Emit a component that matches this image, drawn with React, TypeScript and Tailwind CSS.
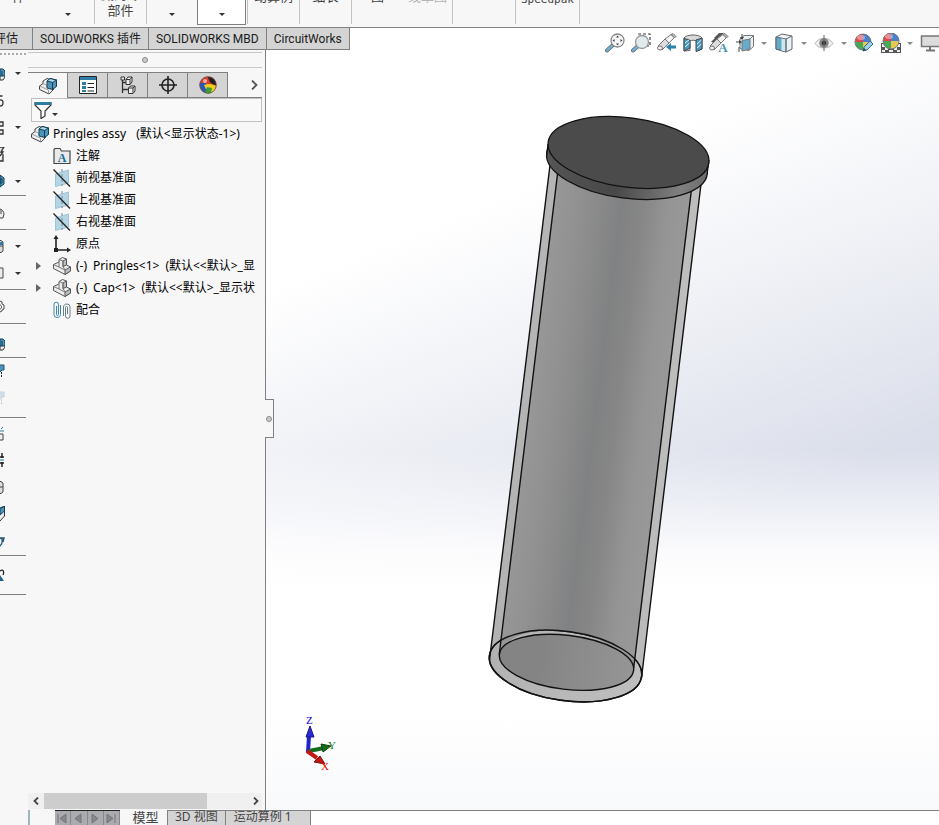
import React from "react";

type IconProps = { className?: string };

const Caret: React.FC<IconProps> = ({ className = "text-[#333]" }) => (
  <svg viewBox="0 0 6 3" className={`h-[3px] w-[6px] shrink-0 ${className}`}>
    <path d="M0 0h6L3 3z" fill="currentColor" />
  </svg>
);

/* ---------- feature tree icons ---------- */

const AssemblyIcon: React.FC = () => (
  <svg viewBox="0 0 18 18" className="h-[18px] w-[18px] shrink-0">
    <path d="M.5 9 4 6.500V4l4-2.500 3 1V10l4 2-5 5L.5 12.500z" fill="#f0f0f0" stroke="#444" strokeLinejoin="round" />
    <path d="M.5 9 9.500 13v4M4 6.500l4 2" fill="none" stroke="#888" strokeWidth=".8" />
    <path d="M8 4 11 1.500 17.500 3v6.500L13.500 12.500 8 11z" fill="#4f93b8" stroke="#123f59" strokeLinejoin="round" />
    <path d="M8 4 13.500 5.500l4-2.500L11 1.500z" fill="#a9d5e9" stroke="#123f59" strokeLinejoin="round" />
    <path d="M13.500 5.500v7" stroke="#123f59" />
  </svg>
);

const PartIcon: React.FC = () => (
  <svg viewBox="0 0 18 18" className="h-[18px] w-[18px] shrink-0">
    <path d="M.5 7.500 6 5V2.500L9.500.5l4 1.500v6l4 2v4L12 17.500.5 11.500z" fill="#ececec" stroke="#555" strokeLinejoin="round" />
    <path d="M12 13l5.500-3v4L12 17.500zM10 4l3.500-2v6L10 9.500z" fill="#bdbdbd" stroke="#555" strokeLinejoin="round" />
    <path d="M.5 7.500 6 10l6 3M6 5v5M6 2.500 10 4v5.500l2 3.500" fill="none" stroke="#777" />
  </svg>
);

const NoteFolderIcon: React.FC = () => (
  <svg viewBox="0 0 18 18" className="h-[18px] w-[18px] shrink-0">
    <path d="M1 16V2.500L2 1.500h5L8.500 4H17v12.500H1z" fill="#e8eaec" stroke="#444" strokeWidth="1.200" />
    <text x="9" y="14.500" textAnchor="middle" fontFamily="Liberation Serif, serif" fontWeight="bold" fontSize="12" fill="#1d6a92">
      A
    </text>
  </svg>
);

const PlaneIcon: React.FC = () => (
  <svg viewBox="0 0 18 18" className="h-[18px] w-[18px] shrink-0">
    <path d="M2.500 5 15.500 1v13L2.500 17.500z" fill="#b5d5e4" stroke="#9fc4d6" />
    <path d="M9 0v17" stroke="#6e8c9b" strokeDasharray="3 2" />
    <path d="M.5.500 17 17.500" stroke="#222" strokeWidth="1.300" />
  </svg>
);

const OriginIcon: React.FC = () => (
  <svg viewBox="0 0 18 18" className="h-[18px] w-[18px] shrink-0">
    <path d="M3 3v12h12" fill="none" stroke="#222" strokeWidth="1.600" />
    <path d="M3 0 5.500 4h-5zM18 15l-4-2.500v5z" fill="#222" />
    <path d="M1 13h4v4H1z" fill="#222" />
  </svg>
);

const MatesIcon: React.FC = () => (
  <svg viewBox="0 0 18 18" className="h-[18px] w-[18px] shrink-0">
    <g fill="none" stroke="#3d86ab">
      <path d="M3.500 5v8.500a1 1 0 0 0 2 0V3.500a2.200 2.200 0 0 0-4.500 0v10a3 3 0 0 0 3 3c2.500 0 3.500-1.500 3.500-3V4" />
      <path d="M14.500 13V6.500a1 1 0 0 0-2 0V15a2.200 2.200 0 0 0 4.500 0V6a3 3 0 0 0-3-3c-2.500 0-3.500 1.500-3.500 3v9" stroke="#6b7e88" />
    </g>
  </svg>
);

const PropertyIcon: React.FC = () => (
  <svg viewBox="0 0 18 18" className="h-[18px] w-[18px]">
    <path d="M.5.500h17v17H.5z" fill="#fff" stroke="#222" />
    <path d="M1 1h16v3H1z" fill="#2d7da6" />
    <path d="M3 6h4v3H3zM3 10h4v3H3zM3 14h4v2H3z" fill="#2d7da6" />
    <path d="M8.500 7.500H15M8.500 11.500H15M8.500 15H15" stroke="#222" />
  </svg>
);

const ConfigIcon: React.FC = () => (
  <svg viewBox="0 0 18 18" className="h-[18px] w-[18px]">
    <g fill="#f0f0f0" stroke="#333">
      <path d="M3.500 3v14M3.500 6.500H7M3.500 13.500H9" fill="none" strokeWidth="1.300" />
      <path d="M2 1h3.500v3H2z" />
      <path d="M7 3.500 9 1h4v5l-2 2.500H7zM9.500 12l2-2h4.500v5l-2 2.500H9.500z" />
      <path d="M7 3.500h4v5M11 3.500 13 1M9.500 12H14v5M14 12l2-2" fill="none" />
    </g>
  </svg>
);

const TargetIcon: React.FC = () => (
  <svg viewBox="0 0 18 18" className="h-[18px] w-[18px]">
    <circle cx="9" cy="9" r="6" fill="none" stroke="#222" strokeWidth="1.600" />
    <path d="M9 0v18M0 9h18" stroke="#222" strokeWidth="1.600" />
  </svg>
);

const BallShape: React.FC = () => (
  <>
    <path d="M9 9V1a8 8 0 0 0-8 8z" fill="#e0484c" />
    <path d="M9 9V1a8 8 0 0 1 8 8z" fill="#4c80cf" />
    <path d="M9 9h8a8 8 0 0 1-8 8z" fill="#e8c850" />
    <path d="M9 9H1a8 8 0 0 0 8 8z" fill="#46a858" />
    <circle cx="9" cy="9" r="8" fill="none" stroke="#777" />
    <ellipse cx="7" cy="4.500" rx="4" ry="2.500" fill="#fff" opacity=".4" />
  </>
);

const AppearanceIcon: React.FC = () => (
  <svg viewBox="0 0 18 18" className="h-[18px] w-[18px]">
    <circle cx="9" cy="9" r="8.500" fill="#e23b2c" />
    <path d="M1 7h6l2 10C4 17 0 12 1 7z" fill="#2856c0" />
    <path d="M5 9c5-2 9-1 12 1-1 5-4 7.500-8 7.500z" fill="#f1cf1c" />
    <path d="m8 11 5 1-1 5c-2 .7-4 .5-6-.5z" fill="#3b9c3b" />
    <path d="M9 1c5-.5 8 3 8 8-4 0-7-3-8-8z" fill="#222" />
    <circle cx="9" cy="9" r="8.300" fill="none" stroke="#554" strokeWidth=".7" />
    <circle cx="6" cy="5" r="2" fill="#fff" opacity=".6" />
  </svg>
);

/* ---------- heads-up view toolbar icons ---------- */

const hud = "h-5 w-5 shrink-0";

const ZoomFitIcon = () => (
  <svg viewBox="0 0 20 20" className={hud}>
    <path d="M2 17.500 8 12" stroke="#666" strokeWidth="4" strokeLinecap="round" />
    <path d="M2 17.500 8 12" stroke="#6fb0d0" strokeWidth="2.500" strokeLinecap="round" />
    <circle cx="12.500" cy="7.500" r="6.500" fill="#f4f6f7" stroke="#888" strokeWidth="1.300" />
    <path d="m12.500 2.500 1.500 2h-3zM12.500 12.500l1.500-2h-3zM7.500 7.500l2-1.500v3zM17.500 7.500l-2-1.500v3z" fill="#444" />
  </svg>
);

const ZoomAreaIcon = () => (
  <svg viewBox="0 0 20 20" className={hud}>
    <path d="M7 1h12v12h-4" fill="none" stroke="#444" strokeWidth="1.200" strokeDasharray="3 2" />
    <path d="M2 17.500 7 13" stroke="#666" strokeWidth="4" strokeLinecap="round" />
    <path d="M2 17.500 7 13" stroke="#6fb0d0" strokeWidth="2.500" strokeLinecap="round" />
    <circle cx="11" cy="9" r="6.500" fill="#e3eaee" stroke="#999" strokeWidth="1.300" />
  </svg>
);

const TelescopeShape = () => (
  <g stroke="#777" strokeLinejoin="round">
    <path d="m1 13 7-7 4 4-7 7z" fill="#ddd" />
    <path d="m8 6 6-4.500 3.500 3L12 10z" fill="#f2f2f2" />
    <path d="m14 1.500 2-1 3 3-1.500 1.500z" fill="#bbb" />
    <ellipse cx="3" cy="15" rx="2.500" ry="2" fill="#eee" />
  </g>
);

const PrevViewIcon = () => (
  <svg viewBox="0 0 20 20" className={hud}>
    <TelescopeShape />
    <path d="m9 14 5-4v2.500h5v3h-5V18z" fill="#2f82ac" />
  </svg>
);

const SectionIcon = () => (
  <svg viewBox="0 0 20 20" className={hud}>
    <path d="M1 5C3 1 17 1 19 5v11l-5 2V8c-2-1-6-1-7 0v9.500L1 18z" fill="#d9d9d9" stroke="#666" />
    <path d="M1 5.500 7 7v8l-6 3zM13 7l6-2v11l-6 2.500z" fill="#4b9bc1" stroke="#444" />
    <path d="m2 10 4.500-3.500M2 14l4.500-4M14 11l4.500-4M14 15l4.500-4" stroke="#dff0f7" />
  </svg>
);

const DynamicAnnotationIcon = () => (
  <svg viewBox="0 0 20 20" className={hud}>
    <path d="M5 5 10 0h5L9 5zM2 9l4-4h5L5 10z" fill="#555" />
    <TelescopeShape />
    <text x="14" y="19" textAnchor="middle" fontFamily="Liberation Serif, serif" fontWeight="bold" fontSize="13" fill="#4a93b8">
      A
    </text>
  </svg>
);

const OrientationIcon = () => (
  <svg viewBox="0 0 20 20" className={hud}>
    <path d="M5 6 9 2.500h9.500v11l-4.500 4-9-2z" fill="#e6f1f6" stroke="#777" />
    <path d="M7 7.500 15 6v10l-8 2z" fill="#68abcb" stroke="#777" />
    <path d="m15 6 3.500-3.500" stroke="#777" />
    <path d="M7 1v5M1 9h4M4 14v5" stroke="#444" />
    <path d="m5 4 2 3 2-3zM4 7l3 2-3 2z" fill="#444" />
  </svg>
);

const DisplayStyleIcon = () => (
  <svg viewBox="0 0 20 20" className={hud}>
    <path d="M2 4 8 1l10 2v13l-6 3-10-3z" fill="#eaf3f8" stroke="#666" strokeLinejoin="round" />
    <path d="m2 4 10 2v13L2 16z" fill="#62a8c9" stroke="#666" />
    <path d="m7.500 5.500 4 .8v12.200l-4-1z" fill="#cfe6f1" />
    <path d="M12 6l6-3M12 6v13" fill="none" stroke="#666" />
  </svg>
);

const EyeIcon = () => (
  <svg viewBox="0 0 20 20" className={hud}>
    <path d="M1 10.500c4-7 14-7 18 0-4 6-14 6-18 0z" fill="#f1f1f1" stroke="#b5b5b5" />
    <circle cx="10" cy="10" r="4.800" fill="#888" />
    <circle cx="10" cy="10" r="2.300" fill="#333" />
    <path d="M10 2v16" stroke="#666" />
  </svg>
);

const EditAppearanceIcon = () => (
  <svg viewBox="0 0 20 20" className={hud}>
    <BallShape />
    <path d="m9 18 1-4 6-6 3 3-6 6z" fill="#9fd0e6" stroke="#2d6f92" />
    <path d="m9 18 1-3 2 2z" fill="#333" />
  </svg>
);

const ApplySceneIcon = () => (
  <svg viewBox="0 0 20 20" className={hud}>
    <path d="M0 10h20v10H0z" fill="#555" />
    <path d="M1 11h3v3H1zM4 14h3v3H4zM16 11h3v3h-3zM13 14h3v3h-3zM1 17h3v2H1zM16 17h3v2h-3zM8 17h4v2H8z" fill="#eee" />
    <g transform="translate(1 -1)">
      <BallShape />
    </g>
  </svg>
);

const MonitorIcon = () => (
  <svg viewBox="0 0 20 20" className={hud}>
    <path d="M1.500 3h20v10.500h-20z" fill="#dcdcdc" stroke="#777" strokeWidth="1.500" />
    <path d="M10 14v3M6 17.500h9" stroke="#777" strokeWidth="2" />
  </svg>
);

/* ---------- ribbon ---------- */

type RibbonGroupProps = { className: string; children?: React.ReactNode };

const RibbonGroup: React.FC<RibbonGroupProps> = ({ className, children }) => (
  <div className={`flex h-6 shrink-0 items-end overflow-hidden border-r border-[#c3c3c3] ${className}`}>
    {children}
  </div>
);

const Ribbon: React.FC = () => (
  <header className="flex h-7 shrink-0 overflow-hidden border-b border-[#808080] bg-[#f7f7f7] text-[13px] leading-4 text-[#444]">
    <RibbonGroup className="w-[95px] gap-10 pl-3">
      <button className="pb-5">件</button>
      <button aria-label="零部件选项" className="pb-2">
        <Caret />
      </button>
    </RibbonGroup>
    <RibbonGroup className="w-[52px] justify-center">
      <button className="w-[42px] pb-1.5 text-center">显示隐藏的零部件</button>
    </RibbonGroup>
    <div className="flex h-6 w-[50px] shrink-0 items-end justify-center">
      <button aria-label="装配体特征" className="pb-2">
        <Caret />
      </button>
    </div>
    <button
      aria-label="参考几何体"
      className="mr-px flex h-[25px] w-[49px] shrink-0 items-end justify-center border border-t-0 border-[#808080] bg-white pb-2"
    >
      <Caret />
    </button>
    <RibbonGroup className="w-[53px] justify-center border-l">
      <button className="pb-5">动算例</button>
    </RibbonGroup>
    <RibbonGroup className="w-[52px] justify-center">
      <button className="pb-5">细表</button>
    </RibbonGroup>
    <RibbonGroup className="w-[101px] gap-6 pl-[19px]">
      <button className="pb-5">图</button>
      <button disabled className="pb-5 text-[#b5b5b5]">
        线草图
      </button>
    </RibbonGroup>
    <RibbonGroup className="w-[63px]" />
    <RibbonGroup className="w-16 justify-center">
      <button className="pb-4 font-['DejaVu_Sans_Mono',monospace] text-[11px]">Speedpak</button>
    </RibbonGroup>
  </header>
);

const commandTabs = ["评估", "SOLIDWORKS 插件", "SOLIDWORKS MBD", "CircuitWorks"];

const CommandTabs: React.FC = () => (
  <nav className="flex h-[22px] shrink-0 border-b border-[#808080] bg-[#d4d4d4] font-['Roboto','Noto_Sans_CJK_SC',sans-serif] text-xs text-[#1b1b1b]">
    {commandTabs.map((tab, i) => (
      <button
        key={tab}
        className={
          i === 0
            ? "flex w-[33px] items-center justify-end overflow-hidden border-r border-[#808080] pr-[14px] whitespace-nowrap"
            : "border-r border-[#808080] px-[7px] whitespace-nowrap"
        }
      >
        {tab}
      </button>
    ))}
  </nav>
);

/* ---------- heads-up toolbar ---------- */

const HudCaret = () => (
  <button aria-label="更多" className="flex w-3 shrink-0 justify-center">
    <Caret className="text-[#888]" />
  </button>
);

const HeadsUpToolbar: React.FC = () => {
  const narrow = "flex w-[26px] shrink-0 justify-center";
  const wide = "flex w-7 shrink-0 justify-center";
  return (
    <div className="ml-auto flex h-[30px] items-center">
      <button aria-label="整屏显示全图" className={narrow}><ZoomFitIcon /></button>
      <button aria-label="局部放大" className={narrow}><ZoomAreaIcon /></button>
      <button aria-label="上一视图" className={narrow}><PrevViewIcon /></button>
      <button aria-label="剖面视图" className={narrow}><SectionIcon /></button>
      <button aria-label="动态注解视图" className={narrow}><DynamicAnnotationIcon /></button>
      <button aria-label="视图定向" className={narrow}><OrientationIcon /></button>
      <HudCaret />
      <button aria-label="显示样式" className={wide}><DisplayStyleIcon /></button>
      <HudCaret />
      <button aria-label="隐藏项目" className={wide}><EyeIcon /></button>
      <HudCaret />
      <button aria-label="编辑外观" className={wide}><EditAppearanceIcon /></button>
      <button aria-label="应用布景" className={narrow}><ApplySceneIcon /></button>
      <HudCaret />
      <button aria-label="视图设定" className="flex w-[23px] shrink-0 overflow-hidden pl-1">
        <MonitorIcon />
      </button>
    </div>
  );
};

/* ---------- left tool strip ---------- */

type StripItem = { art: React.ReactNode; menu?: boolean };
type StripSection = { className: string; items: StripItem[] };

const cube = (
  <>
    <path d="M0 4h3l2 2v5l-2 3H0z" fill="#eee" stroke="#333" />
    <path d="M0 3h3l2 2v5H0z" fill="#4b94bb" stroke="#123f59" />
    <path d="M2 5v5" stroke="#123f59" />
  </>
);
const box = <path d="M0 2.500h1l2 1.500v9l-2 1.500H0M0 8h3" fill="#ddd" stroke="#444" />;
const pin = (
  <>
    <path d="M0 2h4v5H2L0 9" fill="#4b94bb" stroke="#1c5573" />
    <path d="M1.500 9v2M1.500 12v2" stroke="#222" />
  </>
);

const stripSections: StripSection[] = [
  {
    className: "h-[136px]",
    items: [
      { art: cube, menu: true },
      { art: <path d="M2.500 3H0M0 7c4-1 4 6 0 6" fill="none" stroke="#333" strokeWidth="1.300" /> },
      { art: <path d="M0 2h3v4H0M0 10h3v4H0" fill="#eee" stroke="#333" strokeWidth="1.300" />, menu: true },
      { art: <path d="M0 0h4L1 5h2L0 9M3 7v7H0" fill="#ddd" stroke="#333" strokeWidth="1.300" /> },
      { art: <path d="m0 1 4 3v6l-4 3zM0 5h2v4H0z" fill="#4b94bb" stroke="#123f59" />, menu: true },
    ],
  },
  { className: "h-[34px]", items: [{ art: <path d="M0 4c2 0 4 3 4 5l-1 4H0M1 5v4" fill="#eee" stroke="#444" /> }] },
  {
    className: "h-[60px]",
    items: [
      {
        art: (
          <>
            {box}
            <path d="M0 4h3v3H0z" fill="#2d7da6" />
          </>
        ),
        menu: true,
      },
      { art: <path d="M0 3h3v10H0" fill="#eee" stroke="#444" />, menu: true },
    ],
  },
  { className: "h-[34px]", items: [{ art: <path d="m0 2 2 1v2l2 1v4l-2 1v1l-2 1M0 6c2 0 2 4 0 4" fill="none" stroke="#444" /> }] },
  { className: "h-[34px] pt-1.5", items: [{ art: cube }] },
  {
    className: "h-[60px] pb-1.5",
    items: [{ art: pin }, { art: <g opacity=".22">{pin}</g> }],
  },
  {
    className: "h-[138px]",
    items: [
      {
        art: (
          <>
            <path d="M0 9h3v6H0" fill="#eee" stroke="#444" />
            <path d="M0 6h4M1 4l2-2" stroke="#2d7da6" />
          </>
        ),
      },
      {
        art: (
          <>
            <path d="M2 1v5M0 5h4M2 10v5M0 11h4" stroke="#222" strokeWidth="1.500" />
            <path d="M0 8h4" stroke="#2d7da6" />
          </>
        ),
      },
      { art: box },
      {
        art: (
          <>
            <path d="M0 2 4.500 0v10L0 15" fill="#eee" stroke="#333" />
            <path d="M0 3 4.500 0v5L0 9z" fill="#4b94bb" stroke="#123f59" />
          </>
        ),
      },
      { art: <path d="M0 5c3 0 3 5 0 8M0 5h4l-1 4" fill="none" stroke="#1c5573" strokeWidth="1.300" /> },
    ],
  },
  {
    className: "h-[39px]",
    items: [
      {
        art: (
          <>
            <path d="M0 4c4-3 4 2 3 4" fill="none" stroke="#222" strokeWidth="1.300" />
            <path d="m0 8 4 6H0z" fill="#1f6287" />
          </>
        ),
      },
    ],
  },
];

const ToolStrip: React.FC = () => (
  <aside className="flex w-7 shrink-0 flex-col bg-[#f7f7f7]">
    <div className="mt-[3px] mb-[5px] w-[26px] border-t-2 border-dotted border-[#a8a8a8]" />
    {stripSections.map((section, i) => (
      <div key={i} className={`flex w-[26px] flex-col justify-center border-b border-[#808080] ${section.className}`}>
        {section.items.map((item, j) => (
          <button key={j} aria-label={`工具 ${i + 1}.${j + 1}`} className="flex h-[27px] shrink-0 items-center gap-2.5">
            <svg viewBox="0 0 5 16" className="h-4 w-[5px]">
              {item.art}
            </svg>
            {item.menu && <Caret />}
          </button>
        ))}
      </div>
    ))}
  </aside>
);

/* ---------- feature manager ---------- */

const managerTabs = [
  { label: "配置属性", icon: <PropertyIcon /> },
  { label: "配置管理", icon: <ConfigIcon /> },
  { label: "尺寸管理", icon: <TargetIcon /> },
  { label: "外观管理", icon: <AppearanceIcon /> },
];

const treeItems = [
  { parts: ["注解"], icon: <NoteFolderIcon /> },
  { parts: ["前视基准面"], icon: <PlaneIcon /> },
  { parts: ["上视基准面"], icon: <PlaneIcon /> },
  { parts: ["右视基准面"], icon: <PlaneIcon /> },
  { parts: ["原点"], icon: <OriginIcon /> },
  { parts: ["(-)", "Pringles<1>", "(默认<<默认>_显"], icon: <PartIcon />, expandable: true },
  { parts: ["(-)", "Cap<1>", "(默认<<默认>_显示状"], icon: <PartIcon />, expandable: true },
  { parts: ["配合"], icon: <MatesIcon /> },
];

const FeatureTree: React.FC = () => (
  <ul className="min-h-0 flex-1 overflow-hidden pt-px text-xs text-black">
    <li className="flex h-[22px] items-center pl-[3px] whitespace-nowrap">
      <AssemblyIcon />
      <span className="ml-1">Pringles assy</span>
      <span className="ml-2.5">(默认&lt;显示状态-1&gt;)</span>
    </li>
    {treeItems.map((item) => (
      <li key={item.parts.join(" ")} className="flex h-[22px] items-center whitespace-nowrap">
        <span className="flex w-[25px] shrink-0 pl-2">
          {item.expandable && (
            <button aria-label="展开">
              <svg viewBox="0 0 5 8" className="h-2 w-[5px]">
                <path d="M0 0v8l5-4z" fill="#666" />
              </svg>
            </button>
          )}
        </span>
        {item.icon}
        <span className="ml-[5px] flex gap-1.5">
          {item.parts.map((part) => (
            <span key={part}>{part}</span>
          ))}
        </span>
      </li>
    ))}
  </ul>
);

const FeatureManager: React.FC = () => (
  <section className="relative flex w-[238px] shrink-0 flex-col border-r border-[#808080] bg-[#f7f7f7] pt-0.5 pr-[3px]">
    <div className="flex h-4 shrink-0 items-center justify-center border-y border-[#c8c8c8]">
      <span className="h-1.5 w-1.5 rounded-full border border-[#888] bg-[#ccc]" />
    </div>
    <div className="mt-1 flex h-[26px] shrink-0">
      <button aria-label="设计树" className="flex w-[39px] items-center justify-center border-t border-[#808080]">
        <AssemblyIcon />
      </button>
      {managerTabs.map((tab) => (
        <button
          key={tab.label}
          aria-label={tab.label}
          className="flex w-10 items-center justify-center border-y border-l border-[#808080] bg-[#d4d4d4]"
        >
          {tab.icon}
        </button>
      ))}
      <button aria-label="更多标签" className="flex flex-1 items-center justify-end border-b border-l border-[#808080] pr-1">
        <svg viewBox="0 0 7 10" className="h-2.5 w-[7px]">
          <path d="m1 .5 4.500 4.500L1 9.500" fill="none" stroke="#555" strokeWidth="1.800" />
        </svg>
      </button>
    </div>
    <div className="ml-[3px] flex h-6 shrink-0 items-center border border-[#c0c0c0] bg-[#f9f9f9] pl-0.5">
      <button aria-label="过滤器" className="flex items-center">
        <svg viewBox="0 0 18 18" className="h-[18px] w-[18px]">
          <path d="M1 1.500h16v2.500L11 10v5l-4 2.500V10L1 4z" fill="#fff" stroke="#333" strokeWidth="1.200" />
          <path d="M1 1h16v3H1z" fill="#2d7da6" />
        </svg>
        <span className="pt-2">
          <Caret />
        </span>
      </button>
      <input aria-label="过滤特征树" className="min-w-0 flex-1 bg-transparent outline-none" />
    </div>
    <FeatureTree />
    <div className="mb-px flex h-4 shrink-0 items-center bg-[#f0f0f0]">
      <button aria-label="向左滚动" className="flex w-4 shrink-0 justify-center">
        <svg viewBox="0 0 6 8" className="h-2 w-1.5">
          <path d="M5 .5 1.500 4 5 7.500" fill="none" stroke="#444" strokeWidth="1.800" />
        </svg>
      </button>
      <div className="h-full flex-1">
        <div className="h-full w-[79%] bg-[#cdcdcd]" />
      </div>
      <button aria-label="向右滚动" className="flex w-3 shrink-0 justify-center">
        <svg viewBox="0 0 6 8" className="h-2 w-1.5">
          <path d="M1 .5 4.500 4 1 7.500" fill="none" stroke="#444" strokeWidth="1.800" />
        </svg>
      </button>
    </div>
    {/* Splitter handle */}
    <button
      aria-label="折叠面板"
      className="absolute top-[349px] left-full flex h-[39px] w-[9px] items-center justify-center border border-l-0 border-[#808080] bg-[#f7f7f7]"
    >
      <span className="h-1.5 w-1.5 rounded-full border border-[#888] bg-[#ccc]" />
    </button>
  </section>
);

/* ---------- graphics area ---------- */

const ModelCanvas: React.FC = () => (
  <div className="min-h-0 [grid-area:1/1] bg-[linear-gradient(158deg,#ffffff_32%,#ffffff00_68%),linear-gradient(to_bottom,#e3e6ee_0%,#dbdfea_36%,#dadeea_54%,#eceef5_61%,#fbfbfd_67%,#ffffff_72%,#ffffff_88%,#f8f9fb_100%)]">
    <svg viewBox="0 28 939 782" preserveAspectRatio="xMidYMid slice" className="h-full w-full">
      <defs>
        <linearGradient id="tube" gradientUnits="userSpaceOnUse" x1="528" y1="400" x2="664" y2="417">
          <stop offset="0" stopColor="#989898" />
          <stop offset=".25" stopColor="#8e8e8e" />
          <stop offset=".5" stopColor="#808182" />
          <stop offset=".65" stopColor="#868686" />
          <stop offset=".85" stopColor="#959595" />
          <stop offset="1" stopColor="#989898" />
        </linearGradient>
        <linearGradient id="shell" x1="0" x2="1">
          <stop offset="0" stopColor="#b2b2b3" />
          <stop offset="1" stopColor="#bebebe" />
        </linearGradient>
        <linearGradient id="base" x1="0" x2="1">
          <stop offset=".3" stopColor="#848484" />
          <stop offset="1" stopColor="#959595" />
        </linearGradient>
        <linearGradient id="rim" x1="0" x2="1">
          <stop offset="0" stopColor="#555" />
          <stop offset=".45" stopColor="#484848" />
          <stop offset=".85" stopColor="#808080" />
          <stop offset="1" stopColor="#6c6c6c" />
        </linearGradient>
      </defs>

      {/* Tube walls */}
      <g stroke="#111" strokeWidth="1.400">
        <path d="M550 165 489.500 660 641.500 678 701.500 180z" fill="url(#shell)" stroke="none" />
        <ellipse cx="565.500" cy="666" rx="76.800" ry="34.600" transform="rotate(7.900 565.500 666)" fill="url(#shell)" />
        <path d="M558 170 499.300 654c10-20 30-24 60-23 32 2 60 14 74.400 37L692 185z" fill="url(#tube)" stroke="none" />
        <ellipse cx="566.500" cy="662.300" rx="67.600" ry="27" transform="rotate(6.900 566.500 662.300)" fill="url(#base)" />
        <ellipse cx="565.500" cy="666" rx="76.800" ry="34.600" transform="rotate(7.900 565.500 666)" fill="none" />
        <path d="M550 165 489.500 660M701.500 180 641.500 678M558 170 499.300 654M692 185 633.700 668" fill="none" />
      </g>

      {/* Cap */}
      <g stroke="#111" strokeWidth="1.300">
        <ellipse cx="627" cy="163.500" rx="81" ry="34.700" transform="rotate(7.400 627 163.500)" fill="url(#rim)" />
        <path d="M548 144l-1.500 11L707 173l2-13z" fill="url(#rim)" stroke="none" />
        <path d="M548 144l-1.200 11M709 160l-1.800 13" />
        <ellipse cx="628.500" cy="152.500" rx="81" ry="34.700" transform="rotate(7.400 628.500 152.500)" fill="#4b4b4b" />
      </g>

      {/* Orientation triad */}
      <g fontFamily="Liberation Serif, serif" fontSize="11">
        <path d="M308 752l1-16" stroke="#2222cc" strokeWidth="4" />
        <path d="m310 726 4 11h-8z" fill="#2a2ad6" stroke="#1a1a80" />
        <path d="m309 751 15-3" stroke="#176b1f" strokeWidth="4" />
        <path d="m331 746-10-2 2 8z" fill="#176b1f" stroke="#0c4512" />
        <path d="m307 751 10 7" stroke="#c21818" strokeWidth="4" />
        <path d="m325 764-5-8-6 6z" fill="#c21818" stroke="#7d1010" />
        <text x="306" y="724" fill="#0000e8">Z</text>
        <text x="328" y="749" fill="#0a7d1a">Y</text>
        <text x="321" y="770" fill="#f00000">X</text>
      </g>
    </svg>
  </div>
);

/* ---------- bottom tabs ---------- */

const playback = [
  { label: "第一个", d: "M3 2v9M11 2v9L5 6.500z" },
  { label: "上一个", d: "M10 2v9L4 6.500z" },
  { label: "下一个", d: "M4 2v9l6-4.500z" },
  { label: "最后一个", d: "M3 2v9l6-4.500zM11 2v9" },
];

const BottomTabs: React.FC = () => (
  <footer className="flex h-[15px] shrink-0 overflow-hidden bg-[#f7f7f7] text-xs leading-3 text-[#444]">
    <div className="ml-7 w-[27px] shrink-0 border-l-2 border-[#9cb6c0]" />
    <div className="flex w-[65px] shrink-0 border-t border-[#222]">
      {playback.map((b) => (
        <button key={b.label} aria-label={b.label} className="flex-1 border-r border-[#888] bg-[#a9abae]">
          <svg viewBox="0 0 14 13" className="h-[13px] w-[14px]">
            <path d={b.d} fill="#85878a" stroke="#777" />
          </svg>
        </button>
      ))}
    </div>
    <button className="w-[47px] shrink-0 pb-0.5 pl-1 text-[13px] leading-3">模型</button>
    <button className="border border-b-0 border-[#808080] bg-[#d4d4d4] px-[7px] pb-0.5 whitespace-nowrap">3D 视图</button>
    <button className="border-t border-r border-[#808080] bg-[#d4d4d4] pr-[18px] pb-0.5 pl-2 whitespace-nowrap">运动算例 1</button>
    <div className="flex-1 border-t border-[#808080] bg-white" />
  </footer>
);

const App: React.FC = () => {
  return (
    <div className="flex h-screen flex-col overflow-hidden bg-white font-['Noto_Sans','Noto_Sans_CJK_SC',sans-serif]">
      <Ribbon />
      <main className="grid min-h-0 flex-1 grid-cols-1 grid-rows-1">
        <ModelCanvas />
        <div className="flex min-h-0 flex-col [grid-area:1/1]">
          <div className="flex h-[22px] shrink-0 items-start">
            <CommandTabs />
            <HeadsUpToolbar />
          </div>
          <div className="flex min-h-0 flex-1">
            <ToolStrip />
            <FeatureManager />
          </div>
        </div>
      </main>
      <BottomTabs />
    </div>
  );
};

export default App;
